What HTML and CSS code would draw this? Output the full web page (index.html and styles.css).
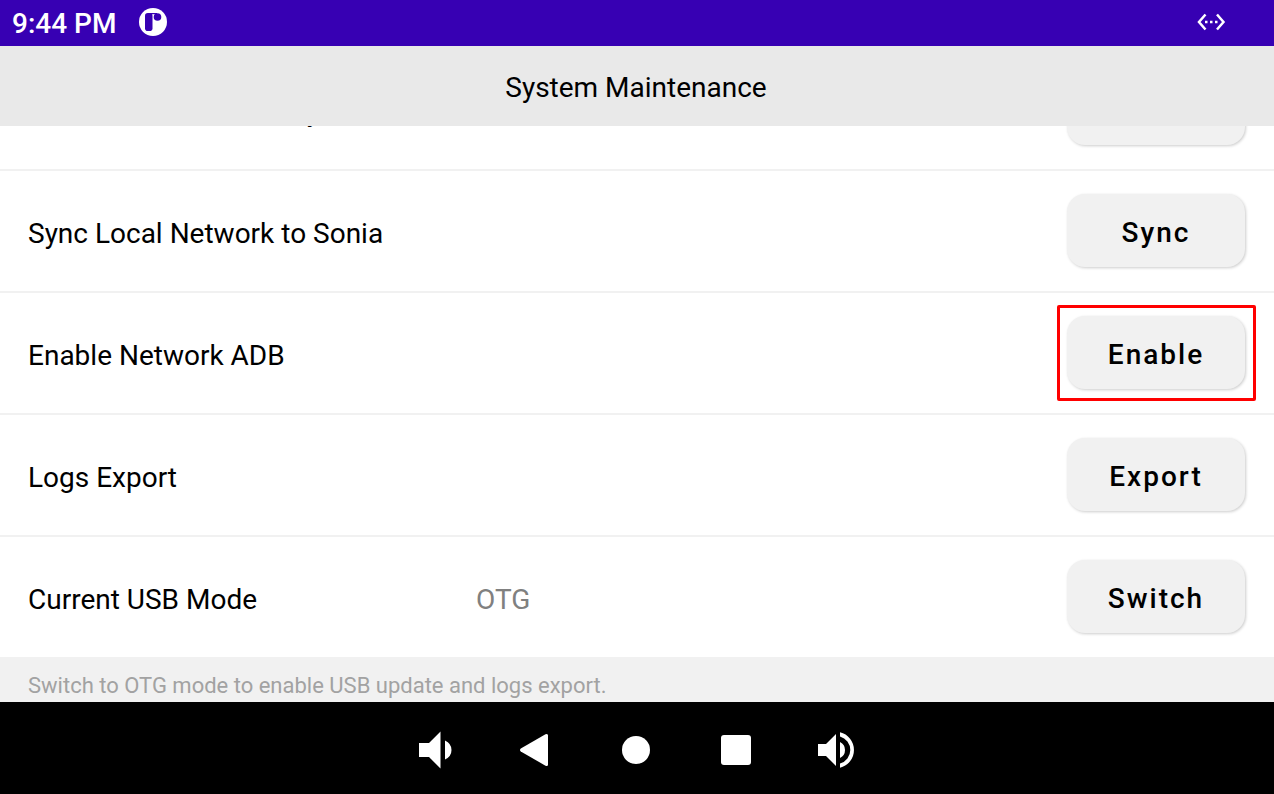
FILE: index.html
```html
<!DOCTYPE html>
<html lang="en">

<head>
    <meta charset="utf-8">
    <meta name="viewport" content="width=device-width, initial-scale=1">
    <title>System Maintenance</title>
    <link rel="stylesheet" href="styles.css">
</head>

<body>
    <div class="status-bar">
        <span class="clock">9:44 PM</span>
        <svg class="app-icon" viewBox="0 0 28 28" width="28" height="28">
            <circle cx="14" cy="14" r="14" fill="#fff" />
            <rect x="6" y="5" width="7.500" height="18" rx="2.800" fill="#3700b3" />
            <path d="M10 5h8v1.200h-8z" fill="#3700b3" />
            <circle cx="18.500" cy="9" r="3.800" fill="#3700b3" />
        </svg>
        <svg class="ethernet-icon" viewBox="0 0 30 18" width="30" height="18">
            <path d="M9.500 1.500L3 9L9.500 16.500M21 1.500L27.500 9L21 16.500" fill="none" stroke="#fff" stroke-width="2.500" />
            <path d="M9 7.700h2.500v2.500h-2.500zM14 7.700h2.500v2.500h-2.500zM19 7.700h2.500v2.500h-2.500z" fill="#fff" />
        </svg>
    </div>

    <header class="title-bar">
        <h1>System Maintenance</h1>
    </header>

    <main class="content">
        <ul class="settings">
            <li class="row">
                <span class="label" id="reset">Reset Device to Factory</span>
                <button class="action" aria-describedby="reset">Reset</button>
            </li>
            <li class="row">
                <span class="label" id="sync">Sync Local Network to Sonia</span>
                <button class="action" aria-describedby="sync">Sync</button>
            </li>
            <li class="row">
                <span class="label" id="adb">Enable Network ADB</span>
                <button class="action highlight" aria-describedby="adb">Enable</button>
            </li>
            <li class="row">
                <span class="label" id="logs">Logs Export</span>
                <button class="action" aria-describedby="logs">Export</button>
            </li>
            <li class="row">
                <span class="label" id="usb">Current USB Mode</span>
                <span class="value">OTG</span>
                <button class="action" aria-describedby="usb">Switch</button>
            </li>
        </ul>
        <p class="note">Switch to OTG mode to enable USB update and logs export.</p>
    </main>

    <nav class="nav-bar">
        <button aria-label="Volume down">
            <svg viewBox="0 0 40 40" width="40" height="40">
                <path d="M3 13h10L24.500 1.500v37L13 27H3zM29 10.500q6.500 3 6.500 9.500t-6.500 9.500z" />
            </svg>
        </button>
        <button aria-label="Back">
            <svg viewBox="0 0 40 40" width="40" height="40">
                <path d="M4.800 18.500L29.500 4.300Q32 3.300 32 5.500v29Q32 36.700 29.500 35.700L4.800 21.500q-1.600-1.500 0-3z" />
            </svg>
        </button>
        <button aria-label="Home">
            <svg viewBox="0 0 40 40" width="40" height="40">
                <circle cx="20" cy="20" r="14" />
            </svg>
        </button>
        <button aria-label="Recent apps">
            <svg viewBox="0 0 40 40" width="40" height="40">
                <rect x="5" y="5" width="30" height="30" rx="3" />
            </svg>
        </button>
        <button aria-label="Volume up">
            <svg viewBox="0 0 40 40" width="40" height="40">
                <path d="M2 14h8L20 4v32L10 26H2zM24 12a8.900 8.900 0 0 1 0 16z" />
                <path d="M24 2.300a18.200 18.200 0 0 1 0 35.400v-4.200a14 14 0 0 0 0-27z" />
            </svg>
        </button>
    </nav>
</body>

</html>
```
FILE: styles.css
```css
* {
    box-sizing: border-box;
}

body {
    margin: 0;
    height: 100vh;
    display: flex;
    flex-direction: column;
    overflow: hidden;
    background-color: #fff;
    color: #000;
    font-family: Roboto, sans-serif;
    font-size: 28px;
    line-height: 32px;
}

.status-bar {
    display: flex;
    align-items: center;
    height: 46px;
    padding: 0 48px 2px 12px;
    background-color: #3700b3;
    color: #fff;
    flex-shrink: 0;
}

.clock {
    font-weight: 500;
    padding-top: 4px;
}

.app-icon {
    margin-left: 23px;
}

.ethernet-icon {
    margin-left: auto;
}

.title-bar {
    display: flex;
    align-items: center;
    justify-content: center;
    height: 80px;
    padding: 4px 2px 0 0;
    background-color: #e9e9e9;
    flex-shrink: 0;
}

.title-bar h1 {
    margin: 0;
    font-size: 28px;
    font-weight: 400;
}

.content {
    flex: 1;
    min-height: 0;
    overflow: hidden;
    background-color: #f1f1f1;
}

/* list is scrolled down, first row is partly under the title bar */
.settings {
    list-style: none;
    margin: -79px 0 0;
    padding: 0;
    background-color: #fff;
}

.row {
    display: flex;
    align-items: center;
    height: 122px;
    padding: 0 29px 1px 28px;
    border-top: 2px solid #f1f1f1;
}

.label {
    width: 448px;
    padding-top: 6px;
}

.value {
    padding-top: 6px;
    color: #808080;
}

.action {
    position: relative;
    width: 178px;
    height: 73px;
    margin-left: auto;
    padding: 4px 0 0;
    border: none;
    border-radius: 18px;
    background-color: #f1f1f1;
    box-shadow: 1px 1px 3px rgba(0, 0, 0, 0.2);
    color: #000;
    font-family: inherit;
    font-size: 28px;
    font-weight: 500;
    letter-spacing: 2px;
}

.highlight::after {
    content: "";
    position: absolute;
    inset: -11px -11px -12px -10px;
    border: 3px solid #f00;
    border-radius: 2px;
}

.note {
    margin: 0;
    padding: 14px 28px;
    color: #a2a2a2;
    font-size: 22px;
    line-height: 30px;
}

.nav-bar {
    display: flex;
    align-items: center;
    justify-content: center;
    gap: 60px;
    height: 92px;
    padding: 4px 2px 0 0;
    background-color: #000;
    flex-shrink: 0;
}

.nav-bar button {
    display: flex;
    padding: 0;
    border: none;
    background: none;
}

.nav-bar svg {
    fill: #fff;
}
```
